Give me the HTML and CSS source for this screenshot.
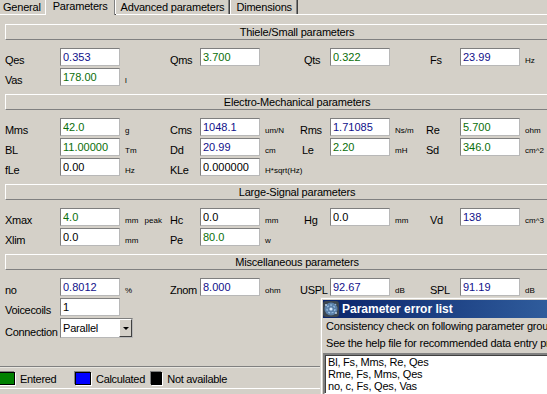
FILE: index.html
```html
<!DOCTYPE html>
<html lang="en">
    <head>
        <meta charset="UTF-8" />
        <title>Driver parameters</title>
        <link rel="stylesheet" href="styles.css">
    </head>
    <body>
        <div class="window">
            <div class="tabs">
                <div class="tab first">General</div>
                <div class="tab active">Parameters</div>
                <div class="tab">Advanced parameters</div>
                <div class="tab">Dimensions</div>
            </div>

            <div class="panel">
                <section class="group">
                    <div class="group-title">Thiele/Small parameters</div>
                    <div class="row">
                        <label>Qes</label><input class="calc" value="0.353" readonly><span class="unit"></span>
                        <label>Qms</label><input class="entered" value="3.700" readonly><span class="unit"></span>
                        <label class="inset">Qts</label><input class="entered" value="0.322" readonly><span class="unit"></span>
                        <label class="inset">Fs</label><input class="calc" value="23.99" readonly><span class="unit">Hz</span>
                    </div>
                    <div class="row">
                        <label>Vas</label><input class="entered" value="178.00" readonly><span class="unit">l</span>
                    </div>
                </section>

                <section class="group">
                    <div class="group-title">Electro-Mechanical parameters</div>
                    <div class="row">
                        <label>Mms</label><input class="entered" value="42.0" readonly><span class="unit">g</span>
                        <label>Cms</label><input class="calc" value="1048.1" readonly><span class="unit">um/N</span>
                        <label>Rms</label><input class="calc" value="1.71085" readonly><span class="unit">Ns/m</span>
                        <label>Re</label><input class="entered" value="5.700" readonly><span class="unit">ohm</span>
                    </div>
                    <div class="row">
                        <label>BL</label><input class="entered" value="11.00000" readonly><span class="unit">Tm</span>
                        <label>Dd</label><input class="calc" value="20.99" readonly><span class="unit">cm</span>
                        <label class="inset-s">Le</label><input class="entered" value="2.20" readonly><span class="unit">mH</span>
                        <label>Sd</label><input class="entered" value="346.0" readonly><span class="unit">cm^2</span>
                    </div>
                    <div class="row">
                        <label>fLe</label><input value="0.00" readonly><span class="unit">Hz</span>
                        <label>KLe</label><input value="0.000000" readonly><span class="unit">H*sqrt(Hz)</span>
                    </div>
                </section>

                <section class="group">
                    <div class="group-title">Large-Signal parameters</div>
                    <div class="row">
                        <label>Xmax</label><input class="entered" value="4.0" readonly><span class="unit">mm <span class="peak">peak</span></span>
                        <label>Hc</label><input value="0.0" readonly><span class="unit">mm</span>
                        <label class="inset">Hg</label><input value="0.0" readonly><span class="unit">mm</span>
                        <label class="inset">Vd</label><input class="calc" value="138" readonly><span class="unit">cm^3</span>
                    </div>
                    <div class="row">
                        <label>Xlim</label><input value="0.0" readonly><span class="unit">mm</span>
                        <label>Pe</label><input class="entered" value="80.0" readonly><span class="unit">w</span>
                    </div>
                </section>

                <section class="group">
                    <div class="group-title">Miscellaneous parameters</div>
                    <div class="row">
                        <label>no</label><input class="calc" value="0.8012" readonly><span class="unit">%</span>
                        <label>Znom</label><input class="calc" value="8.000" readonly><span class="unit">ohm</span>
                        <label>USPL</label><input class="calc" value="92.67" readonly><span class="unit">dB</span>
                        <label class="inset">SPL</label><input class="calc" value="91.19" readonly><span class="unit">dB</span>
                    </div>
                    <div class="row">
                        <label>Voicecoils</label><input value="1" readonly><span class="unit"></span>
                    </div>
                    <div class="row">
                        <label>Connection</label>
                        <div class="combo">
                            <span class="combo-text">Parallel</span>
                            <span class="combo-btn"><span class="arrow"></span></span>
                        </div>
                    </div>
                </section>
            </div>

            <div class="legend">
                <div class="legend-item"><span class="swatch green"></span>Entered</div>
                <div class="legend-item"><span class="swatch blue"></span>Calculated</div>
                <div class="legend-item"><span class="swatch black"></span>Not available</div>
            </div>

            <div class="dialog">
                <div class="dialog-title">
                    <svg class="dialog-icon" width="16" height="16" viewBox="0 0 16 16">
                        <rect x="0" y="0" width="16" height="16" rx="3" fill="#3c4650"></rect>
                        <circle cx="8" cy="8" r="6.5" fill="#5a7fa8"></circle>
                        <circle cx="8" cy="8" r="4" fill="none" stroke="#9cc3e6" stroke-width="1.2" stroke-dasharray="2 1.5"></circle>
                        <circle cx="8" cy="8" r="1.6" fill="#d8ecff"></circle>
                        <circle cx="3" cy="4" r="0.9" fill="#c8dcf0"></circle>
                        <circle cx="13" cy="12" r="0.9" fill="#c8dcf0"></circle>
                        <circle cx="12.5" cy="3.5" r="0.8" fill="#8fb0d0"></circle>
                    </svg>
                    <span>Parameter error list</span>
                </div>
                <div class="dialog-body">
                    <p class="dialog-text">Consistency check on following parameter groups failed:</p>
                    <p class="dialog-text">See the help file for recommended data entry procedure.</p>
                    <div class="listbox">
                        <div>Bl, Fs, Mms, Re, Qes</div>
                        <div>Rme, Fs, Mms, Qes</div>
                        <div>no, c, Fs, Qes, Vas</div>
                    </div>
                </div>
            </div>
        </div>
    </body>
</html>
```

FILE: styles.css
```css
*,
*::before,
*::after {
    box-sizing: border-box;
}

body {
    margin: 0;
    background: #d4d0c8;
    color: #000;
    font-family: "Liberation Sans", Arial, sans-serif;
    font-size: 11px;
    letter-spacing: -0.2px;
    overflow: hidden;
}

.window {
    position: relative;
    width: 600px;
    height: 394px;
}

/* tab strip */
.tabs {
    display: flex;
    height: 14px;
    position: relative;
    z-index: 1;
}

.tab {
    height: 14px;
    line-height: 14px;
    padding: 0 5px;
    border-left: 1px solid #fff;
    border-right: 1px solid #404040;
    box-shadow: inset -1px 0 #808080;
    white-space: nowrap;
}

.tab.first {
    border-left: 0;
    padding: 0 5px 0 3px;
}

.tab.active {
    height: 15px;
    line-height: 12px;
    margin: 0 -1px 0 -2px;
    padding: 0 7px;
    background: #d4d0c8;
}

.panel {
    height: 353px;
    padding-top: 1px;
    border-top: 1px solid #fff;
    border-bottom: 1px solid #808080;
}

/* parameter groups */
.group {
    margin-top: 8px;
}

.group-title {
    width: 584px;
    height: 16px;
    margin: 0 0 8px 5px;
    line-height: 14px;
    text-align: center;
    border: 1px solid;
    border-color: #fff #808080 #808080 #fff;
}

.row {
    display: grid;
    grid-template-columns: 55px 60px 50px 30px 60px 40px 30px 60px 36px 34px 60px 60px;
    align-items: end;
    margin-left: 5px;
}

.row + .row {
    margin-top: 2px;
}

.row label {
    line-height: 12px;
    letter-spacing: -0.3px;
    white-space: nowrap;
}

.row label.inset {
    padding-left: 4px;
}

.row label.inset-s {
    padding-left: 2px;
}

.row input {
    width: 60px;
    height: 18px;
    padding: 0 2px;
    border: 1px solid;
    border-color: #7f7f7f #b8b8b8 #b8b8b8 #7f7f7f;
    background: #fff;
    color: #000;
    font-family: "Liberation Sans", Arial, sans-serif;
    font-size: 11px;
    letter-spacing: 0;
    outline: none;
}

.row input.entered {
    color: #0a6e0a;
}

.row input.calc {
    color: #10108a;
}

.unit {
    padding-left: 5px;
    font-size: 8px;
    line-height: 10px;
    letter-spacing: 0;
    white-space: nowrap;
}

.unit .peak {
    margin-left: 4px;
}

/* combo box */
.combo {
    grid-column: span 2;
    display: flex;
    width: 73px;
    height: 20px;
    border: 1px solid;
    border-color: #7f7f7f #b8b8b8 #b8b8b8 #7f7f7f;
    background: #fff;
}

.combo-text {
    flex: 1;
    padding-left: 2px;
    line-height: 18px;
}

.combo-btn {
    display: flex;
    align-items: center;
    justify-content: center;
    width: 13px;
    border: 1px solid;
    border-color: #fff #404040 #404040 #fff;
    background: #d4d0c8;
}

.arrow {
    border-top: 3px solid #000;
    border-left: 3px solid transparent;
    border-right: 3px solid transparent;
}

/* legend */
.legend {
    display: flex;
    align-items: center;
    height: 22px;
    margin-left: -1px;
    padding-top: 1px;
    border-top: 1px solid #e8e6e0;
    border-bottom: 1px solid #fff;
    letter-spacing: -0.3px;
}

.legend-item {
    display: flex;
    align-items: center;
    gap: 5px;
    width: 76px;
    white-space: nowrap;
}

.swatch {
    width: 16px;
    height: 13px;
    border: 1px solid #000;
    box-shadow: -1px -1px 0 #808080, 1px 1px 0 #fff;
}

.swatch.green {
    background: #008000;
}

.swatch.blue {
    background: #0000ff;
}

.swatch.black {
    background: #000;
}

/* error dialog */
.dialog {
    position: absolute;
    left: 320px;
    top: 297px;
    z-index: 2;
    width: 440px;
    height: 200px;
    padding: 2px;
    border: 1px solid #dcd9d2;
    box-shadow: inset 1px 1px #fff;
    background: #d4d0c8;
}

.dialog-title {
    display: flex;
    align-items: center;
    gap: 3px;
    height: 18px;
    background: linear-gradient(90deg, #0a246a 0, #2f5c9c 224px, #a6caf0 440px);
    color: #fff;
    font-size: 12px;
    font-weight: bold;
    letter-spacing: 0;
}

.dialog-icon {
    flex: none;
}

.dialog-text {
    margin: 0;
    padding-left: 3px;
    line-height: 17px;
    white-space: nowrap;
}

.listbox {
    margin-top: 1px;
    padding: 1px 3px;
    line-height: 12px;
    border: 2px solid;
    border-color: #808080 #fff #fff #808080;
    box-shadow: inset 1px 1px #404040;
    background: #fff;
}
```
